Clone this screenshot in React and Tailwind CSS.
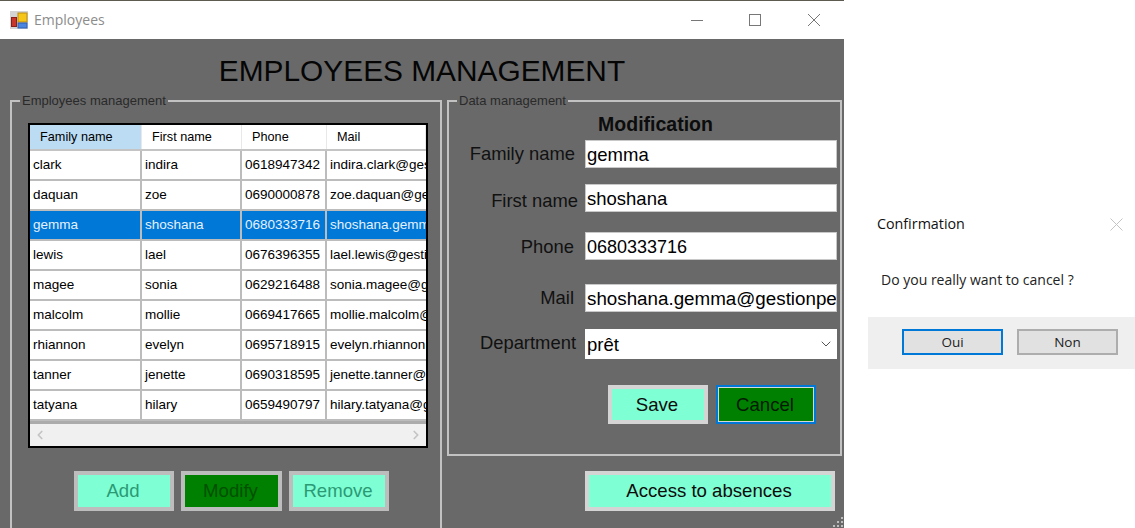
import React from 'react';
import { ChevronDown, ChevronLeft, ChevronRight } from 'lucide-react';

const employees = [
  ['clark', 'indira', '0618947342', 'indira.clark@gestionpersonnel.fr'],
  ['daquan', 'zoe', '0690000878', 'zoe.daquan@gestionpersonnel.fr'],
  ['gemma', 'shoshana', '0680333716', 'shoshana.gemma@gestionpersonnel.fr'],
  ['lewis', 'lael', '0676396355', 'lael.lewis@gestionpersonnel.fr'],
  ['magee', 'sonia', '0629216488', 'sonia.magee@gestionpersonnel.fr'],
  ['malcolm', 'mollie', '0669417665', 'mollie.malcolm@gestionpersonnel.fr'],
  ['rhiannon', 'evelyn', '0695718915', 'evelyn.rhiannon@gestionpersonnel.fr'],
  ['tanner', 'jenette', '0690318595', 'jenette.tanner@gestionpersonnel.fr'],
  ['tatyana', 'hilary', '0659490797', 'hilary.tatyana@gestionpersonnel.fr'],
];

const headers = ['Family name', 'First name', 'Phone', 'Mail'];

const fields = [
  { label: 'Family name', value: 'gemma', row: 'mt-[5px]', text: 'mr-[10px] mt-0', input: 'text-[18.5px]' },
  { label: 'First name', value: 'shoshana', row: 'mt-[16px]', text: 'mr-[7px] mt-[3px]', input: 'text-[18.5px]' },
  { label: 'Phone', value: '0680333716', row: 'mt-[20px]', text: 'mr-[11px] mt-px', input: 'text-[18px]' },
  { label: 'Mail', value: 'shoshana.gemma@gestionpersonnel.fr', row: 'mt-[24px]', text: 'mr-[11px] mt-0', input: 'text-[18.8px]' },
];

function GreenButton({ children, className }) {
  return (
    <button className={`flex items-center justify-center border-[4px] bg-[#7fffd4] text-[18.6px] pr-[2px] ${className}`}>
      {children}
    </button>
  );
}

function AppIcon() {
  return (
    <svg width="18" height="18" viewBox="0 0 18 18">
      <rect width="18" height="18" fill="#d4d4d4" />
      <rect x="8" y="2" width="9" height="9" fill="#f5c518" stroke="#b98a10" />
      <rect x="1.5" y="6.5" width="5" height="9" fill="#c8352b" stroke="#8a1f1a" />
      <rect x="8" y="12" width="9" height="5" fill="#4a86e0" stroke="#2f5fb0" />
    </svg>
  );
}

function WindowControls() {
  return (
    <div className="flex items-center">
      <svg width="12" height="12" viewBox="0 0 12 12" className="mr-[46px]" stroke="#777" fill="none">
        <path d="M0 6.5h12" />
      </svg>
      <svg width="12" height="12" viewBox="0 0 12 12" className="mr-[47px]" stroke="#777" fill="none">
        <rect x="0.5" y="0.5" width="11" height="11" />
      </svg>
      <svg width="12" height="12" viewBox="0 0 12 12" stroke="#777" fill="none">
        <path d="M0 0l12 12M12 0L0 12" />
      </svg>
    </div>
  );
}

function EmployeeGrid() {
  return (
    <div className="w-[400px] h-[325px] border-2 border-black bg-[#ababab] flex flex-col overflow-hidden font-['Liberation_Sans',sans-serif] text-[13.5px] text-black">
      <div className="grid grid-cols-[112px_100px_85px_99px] h-[26px] shrink-0 bg-white border-b-2 border-[#c4c4c4] text-[12.7px]">
        {headers.map((h, i) => (
          <div
            key={h}
            className={`flex items-center border-r border-[#e8e8e8] pl-[10px] pt-[2px] ${i === 0 ? 'bg-[#bcdcf4]' : ''}`}
          >
            {h}
          </div>
        ))}
      </div>
      {employees.map((row) => {
        const selected = row[0] === 'gemma';
        return (
          <div
            key={row[0]}
            className={`grid grid-cols-[112px_100px_85px_99px] h-[30px] shrink-0 border-b-2 border-[#bcbcbc] ${selected ? 'bg-[#0078d7] text-[#e6f1fb]' : 'bg-white'}`}
          >
            {row.map((cell) => (
              <div key={cell} className="flex items-center pl-[3px] pt-px border-r-2 border-[#bcbcbc] overflow-hidden whitespace-nowrap last:border-r-0">
                {cell}
              </div>
            ))}
          </div>
        );
      })}
      <div className="mt-auto h-[22px] shrink-0 bg-[#f0f0f0] flex items-center justify-between px-[3px] text-[#c4c4c4]">
        <ChevronLeft size={14} strokeWidth={3} />
        <ChevronRight size={14} strokeWidth={3} />
      </div>
    </div>
  );
}

function LeftPanel() {
  return (
    <fieldset className="w-[432px] h-[440px] border-2 border-[#c2c2c2] shrink-0">
      <legend className="ml-[8px] px-[2px] text-[13px] leading-[16px] text-[#2a2a2a]">Employees management</legend>
      <div className="pl-[16px] mt-[14px]">
        <EmployeeGrid />
        <div className="flex mt-[23px] ml-[46px] gap-[7px] h-[40px]">
          <GreenButton className="w-[100px] border-[#bdbdbd] text-[#2b9a74]">Add</GreenButton>
          <GreenButton className="w-[101px] border-[#bdbdbd] !bg-[#008000] text-[#005000]">Modify</GreenButton>
          <GreenButton className="w-[100px] border-[#bdbdbd] text-[#2b9a74]">Remove</GreenButton>
        </div>
      </div>
    </fieldset>
  );
}

function DataPanel() {
  return (
    <fieldset className="h-[363px] border-2 border-[#c2c2c2]">
      <legend className="ml-[8px] px-[2px] text-[13px] leading-[16px] text-[#2a2a2a]">Data management</legend>
      <h2 className="text-center font-bold text-[19.5px] leading-[22px] text-[#0c0c0c] ml-[22px] pt-[4px] box-content">Modification</h2>
      {fields.map((f) => (
        <div key={f.label} className={`flex justify-end pr-[3px] h-[28px] ${f.row}`}>
          <span className={`text-[18.4px] text-[#111] leading-[28px] ${f.text}`}>{f.label}</span>
          <div className={`w-[252px] h-[28px] bg-white border border-[#c8c8c8] pl-px leading-[28px] text-black overflow-hidden whitespace-nowrap ${f.input}`}>
            {f.value}
          </div>
        </div>
      ))}
      <div className="flex justify-end pr-[3px] mt-[17px] h-[30px]">
        <span className="text-[18.4px] text-[#111] leading-[28px] mr-[9px]">Department</span>
        <div className="w-[252px] h-[30px] bg-white pl-[2px] pr-[3px] text-[18.5px] leading-[29px] text-black flex items-center justify-between">
          prêt
          <ChevronDown size={16} strokeWidth={1.5} className="text-[#555]" />
        </div>
      </div>
      <div className="flex mt-[26px] ml-[159px] gap-[8px] h-[39px]">
        <GreenButton className="w-[100px] border-[#d4d4d4] text-[#0c0c0c]">Save</GreenButton>
        <button className="w-[100px] border-2 border-[#0078d7] bg-[#008000] text-[18.6px] pr-[2px] text-[#041a04] outline outline-1 -outline-offset-3 outline-[#d8d8d8]">
          Cancel
        </button>
      </div>
    </fieldset>
  );
}

function ResizeGrip() {
  return (
    <svg width="12" height="12" viewBox="0 0 12 12" className="absolute right-0 bottom-0" fill="#bdbdbd">
      <rect x="9" y="1" width="2" height="2" />
      <rect x="5" y="5" width="2" height="2" />
      <rect x="9" y="5" width="2" height="2" />
      <rect x="1" y="9" width="2" height="2" />
      <rect x="5" y="9" width="2" height="2" />
      <rect x="9" y="9" width="2" height="2" />
    </svg>
  );
}

function ConfirmDialog() {
  return (
    <div className="w-full font-['Open_Sans',sans-serif]">
      <div className="flex items-center justify-between pl-[9px] pr-[12px] h-[24px] text-[14.3px] text-[#111]">
        Confirmation
        <svg width="13" height="13" viewBox="0 0 13 13" stroke="#c4c4c4" fill="none">
          <path d="M0.5 0.5l12 12M12.5 0.5l-12 12" />
        </svg>
      </div>
      <p className="mt-[35px] pl-[13px] text-[14px] leading-[18px] font-medium text-[#222]">Do you really want to cancel ?</p>
      <div className="mt-[28px] h-[52px] bg-[#efefef] flex items-center justify-end pr-[17px] pb-[2px] gap-[14px] text-[13.5px] font-medium text-[#222]">
        <button className="w-[101px] h-[26px] bg-[#e1e1e1] border-2 border-[#0078d7]">Oui</button>
        <button className="w-[101px] h-[26px] bg-[#e1e1e1] border-2 border-[#adadad]">Non</button>
      </div>
    </div>
  );
}

export default function App() {
  return (
    <div className="w-[1135px] h-[528px] overflow-hidden bg-white flex font-['Liberation_Sans',sans-serif]">
      <div className="w-[844px] shrink-0 flex flex-col relative">
        <div className="h-px bg-[#5d5a50]" />
        <div className="h-[38px] bg-white flex items-center justify-between pl-[10px] pr-[24px] shrink-0">
          <div className="flex items-center gap-[6px]">
            <AppIcon />
            <span className="font-['Open_Sans',sans-serif] text-[14px] text-[#8c8c8c] -mt-[2px]">Employees</span>
          </div>
          <WindowControls />
        </div>
        <div className="flex-1 bg-[#696969] overflow-hidden">
          <h1 className="text-center text-[29.85px] leading-[34px] mt-[15px] text-[#050505]">EMPLOYEES MANAGEMENT</h1>
          <div className="flex mt-[5px] ml-[10px] gap-[5px]">
            <LeftPanel />
            <div className="w-[395px] flex flex-col">
              <DataPanel />
              <div className="flex justify-end pr-[7px] mt-[15px]">
                <GreenButton className="w-[250px] h-[40px] border-[#d4d4d4] text-[#0c0c0c]">Access to absences</GreenButton>
              </div>
            </div>
          </div>
        </div>
        <ResizeGrip />
      </div>
      <div className="flex-1 pl-[24px] pt-[212px]">
        <ConfirmDialog />
      </div>
    </div>
  );
}
